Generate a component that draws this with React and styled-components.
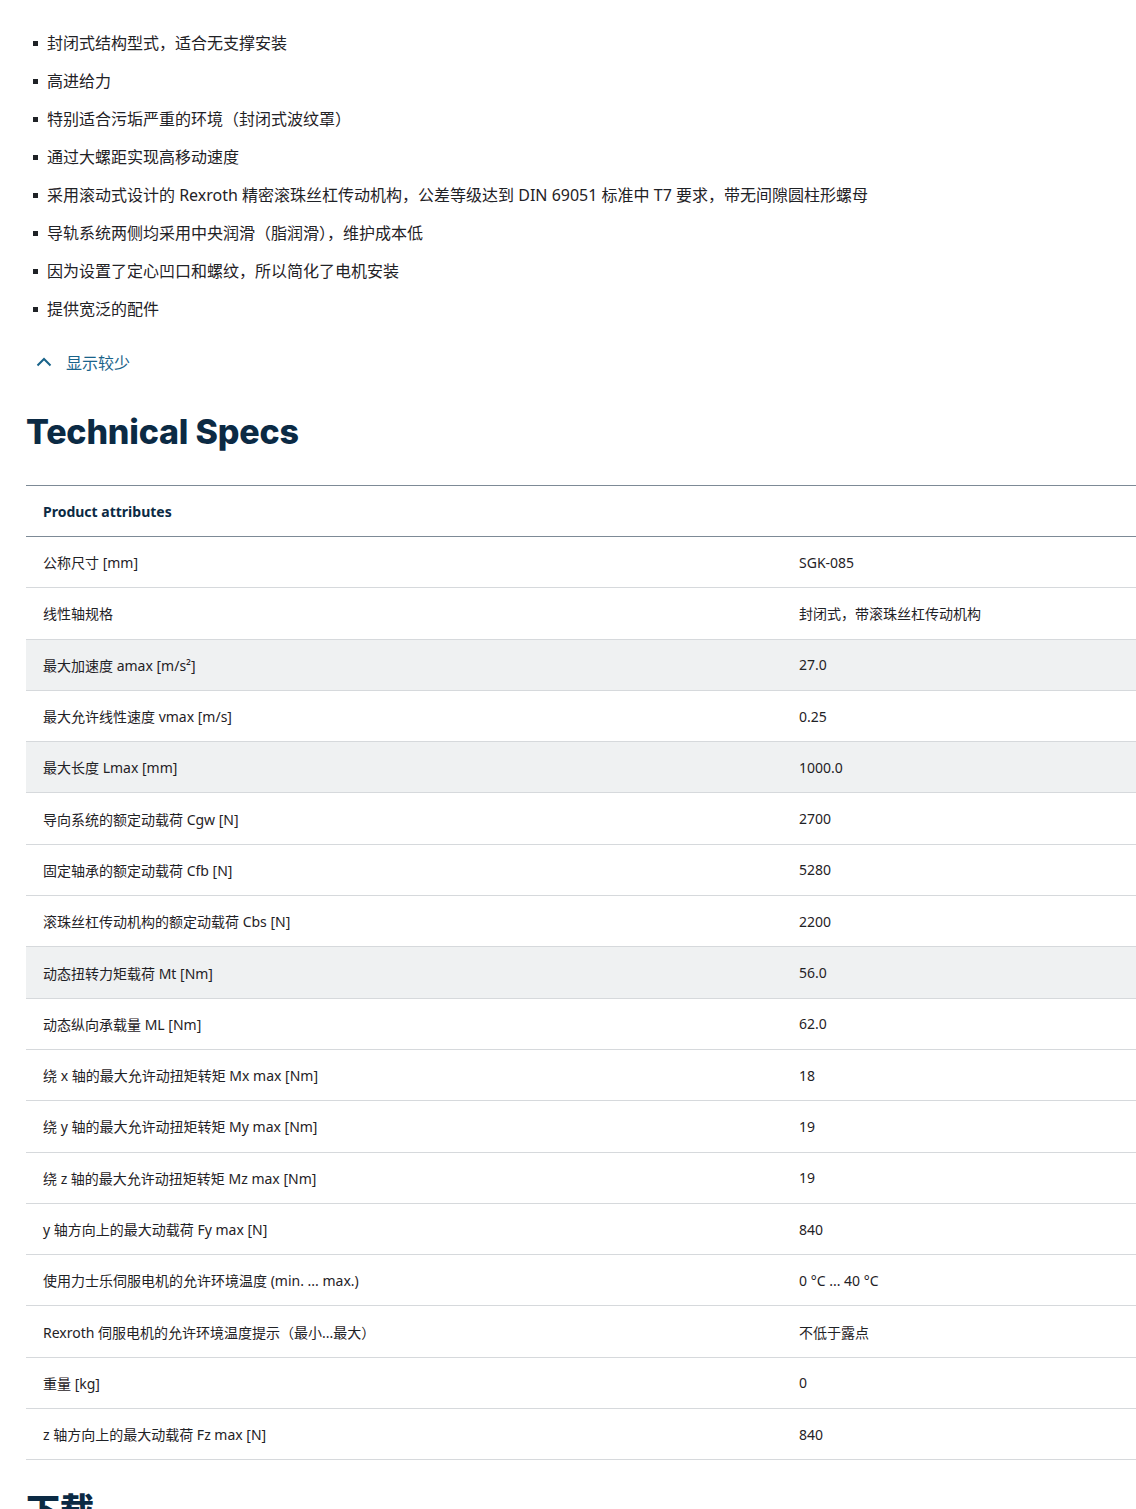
import React from "react";
import styled, { createGlobalStyle } from "styled-components";

const Global = createGlobalStyle`
  body {
    margin: 0;
    overflow: hidden;
    font-family: "Noto Sans", "Noto Sans CJK SC", sans-serif;
    color: #1f2226;
    background: #fff;
  }
`;

const Page = styled.div`
  padding: 24px 0 0 26px;
  width: 1130px;
`;

const List = styled.ul`
  list-style: none;
  margin: 0;
  padding: 0 0 0 7px;
`;

const Item = styled.li`
  font-size: 16px;
  line-height: 38px;
  height: 38px;
  display: flex;
  align-items: center;
  &::before {
    content: "";
    width: 5px;
    height: 5px;
    background: #1f2226;
    margin-right: 9px;
  }
`;

const Toggle = styled.div`
  display: flex;
  align-items: center;
  gap: 14px;
  margin: 21px 0 0 10px;
  color: #19638a;
  font-size: 16px;
  height: 26px;
`;

const Heading = styled.h2`
  margin: 35px 0 31px;
  font-family: "Inter", "Noto Sans CJK SC", sans-serif;
  font-weight: 800;
  font-size: 34px;
  line-height: 44px;
  color: #0b2a44;
  letter-spacing: -0.2px;
`;

const Table = styled.div`
  border-top: 1px solid #7d8a96;
`;

const HeadRow = styled.div`
  height: 50px;
  display: flex;
  align-items: center;
  padding-left: 17px;
  font-size: 14px;
  font-weight: 700;
  color: #0b2a44;
  border-bottom: 1px solid #7d8a96;
`;

const Row = styled.div`
  height: 50.3px;
  display: grid;
  grid-template-columns: 756px 1fr;
  align-items: center;
  padding-left: 17px;
  font-size: 14px;
  border-bottom: 1px solid #d6d9dc;
  background: ${(p) => (p.$shade ? "#eff1f2" : "#fff")};
`;

const Next = styled.h2`
  margin: 24px 0 0;
  font-size: 34px;
  font-weight: 800;
  color: #0b2a44;
  font-family: "Noto Sans CJK SC", sans-serif;
`;

const bullets = [
  "封闭式结构型式，适合无支撑安装",
  "高进给力",
  "特别适合污垢严重的环境（封闭式波纹罩）",
  "通过大螺距实现高移动速度",
  "采用滚动式设计的 Rexroth 精密滚珠丝杠传动机构，公差等级达到 DIN 69051 标准中 T7 要求，带无间隙圆柱形螺母",
  "导轨系统两侧均采用中央润滑（脂润滑），维护成本低",
  "因为设置了定心凹口和螺纹，所以简化了电机安装",
  "提供宽泛的配件",
];

const rows = [
  ["公称尺寸 [mm]", "SGK-085"],
  ["线性轴规格", "封闭式，带滚珠丝杠传动机构"],
  ["最大加速度 amax [m/s²]", "27.0", true],
  ["最大允许线性速度 vmax [m/s]", "0.25"],
  ["最大长度 Lmax [mm]", "1000.0", true],
  ["导向系统的额定动载荷 Cgw [N]", "2700"],
  ["固定轴承的额定动载荷 Cfb [N]", "5280"],
  ["滚珠丝杠传动机构的额定动载荷 Cbs [N]", "2200"],
  ["动态扭转力矩载荷 Mt [Nm]", "56.0", true],
  ["动态纵向承载量 ML [Nm]", "62.0"],
  ["绕 x 轴的最大允许动扭矩转矩 Mx max [Nm]", "18"],
  ["绕 y 轴的最大允许动扭矩转矩 My max [Nm]", "19"],
  ["绕 z 轴的最大允许动扭矩转矩 Mz max [Nm]", "19"],
  ["y 轴方向上的最大动载荷 Fy max [N]", "840"],
  ["使用力士乐伺服电机的允许环境温度 (min. ... max.)", "0 °C ... 40 °C"],
  ["Rexroth 伺服电机的允许环境温度提示（最小...最大）", "不低于露点"],
  ["重量 [kg]", "0"],
  ["z 轴方向上的最大动载荷 Fz max [N]", "840"],
];

export default function App() {
  return (
    <Page>
      <Global />
      <List>
        {bullets.map((b) => (
          <Item key={b}>{b}</Item>
        ))}
      </List>
      <Toggle>
        <svg width="16" height="10" viewBox="0 0 16 10" fill="none" stroke="#19638a" strokeWidth="2">
          <path d="M1.5 8.5 8 2l6.5 6.5" />
        </svg>
        显示较少
      </Toggle>
      <Heading>Technical Specs</Heading>
      <Table>
        <HeadRow>Product attributes</HeadRow>
        {rows.map(([k, v, s]) => (
          <Row key={k} $shade={s}>
            <span>{k}</span>
            <span>{v}</span>
          </Row>
        ))}
      </Table>
      <Next>下载</Next>
    </Page>
  );
}
